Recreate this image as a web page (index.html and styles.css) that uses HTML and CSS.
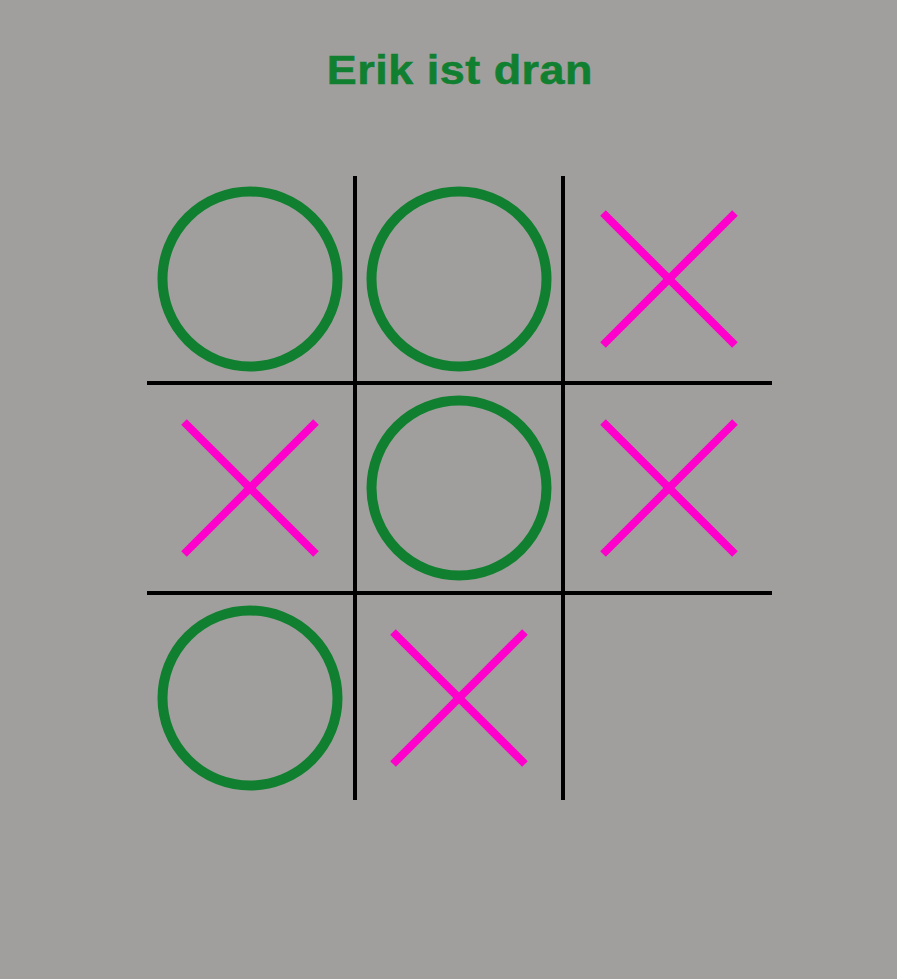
FILE: index.html
```html
<!DOCTYPE html>
<html lang="de">
<head>
<meta charset="utf-8">
<title>Tic Tac Toe</title>
<link rel="stylesheet" href="styles.css">
</head>
<body>
<main class="page">
  <h1 class="status">Erik ist dran</h1>
  <div class="board">
    <div class="cell"><svg class="mark" viewBox="0 0 200 200"><circle class="o" cx="100" cy="100" r="87.5"/></svg></div>
    <div class="cell"><svg class="mark" viewBox="0 0 200 200"><circle class="o" cx="100" cy="100" r="87.5"/></svg></div>
    <div class="cell"><svg class="mark" viewBox="0 0 200 200"><line class="x" x1="34" y1="34" x2="166" y2="166"/><line class="x" x1="166" y1="34" x2="34" y2="166"/></svg></div>
    <div class="cell"><svg class="mark" viewBox="0 0 200 200"><line class="x" x1="34" y1="34" x2="166" y2="166"/><line class="x" x1="166" y1="34" x2="34" y2="166"/></svg></div>
    <div class="cell"><svg class="mark" viewBox="0 0 200 200"><circle class="o" cx="100" cy="100" r="87.5"/></svg></div>
    <div class="cell"><svg class="mark" viewBox="0 0 200 200"><line class="x" x1="34" y1="34" x2="166" y2="166"/><line class="x" x1="166" y1="34" x2="34" y2="166"/></svg></div>
    <div class="cell"><svg class="mark" viewBox="0 0 200 200"><circle class="o" cx="100" cy="100" r="87.5"/></svg></div>
    <div class="cell"><svg class="mark" viewBox="0 0 200 200"><line class="x" x1="34" y1="34" x2="166" y2="166"/><line class="x" x1="166" y1="34" x2="34" y2="166"/></svg></div>
    <div class="cell"></div>
  </div>
</main>
</body>
</html>
```
FILE: styles.css
```css
html, body {
  margin: 0;
  padding: 0;
  background: #a19f9d;
  height: 100%;
}
.page {
  display: flex;
  flex-direction: column;
  align-items: center;
  padding: 47px 0 0 22px;
}
.status {
  margin: 0 0 83px 0;
  font-family: "Liberation Sans", Arial, sans-serif;
  font-weight: bold;
  font-size: 40px;
  line-height: 46px;
  letter-spacing: 0.5px;
  color: #108030;
  transform: scaleX(1.12);
  -webkit-text-stroke: 0.6px #108030;
}
.board {
  display: grid;
  grid-template-columns: 206px 204px 207px;
  grid-template-rows: 205px 206px 205px;
  gap: 4px;
  background: #000;
}
.cell {
  background: #a19f9d;
  display: flex;
  align-items: center;
  justify-content: center;
}
.mark {
  width: 200px;
  height: 200px;
  display: block;
  flex: none;
}
.o {
  fill: none;
  stroke: #108030;
  stroke-width: 10;
}
.x {
  stroke: #ff00cc;
  stroke-width: 8;
  stroke-linecap: butt;
}
```
